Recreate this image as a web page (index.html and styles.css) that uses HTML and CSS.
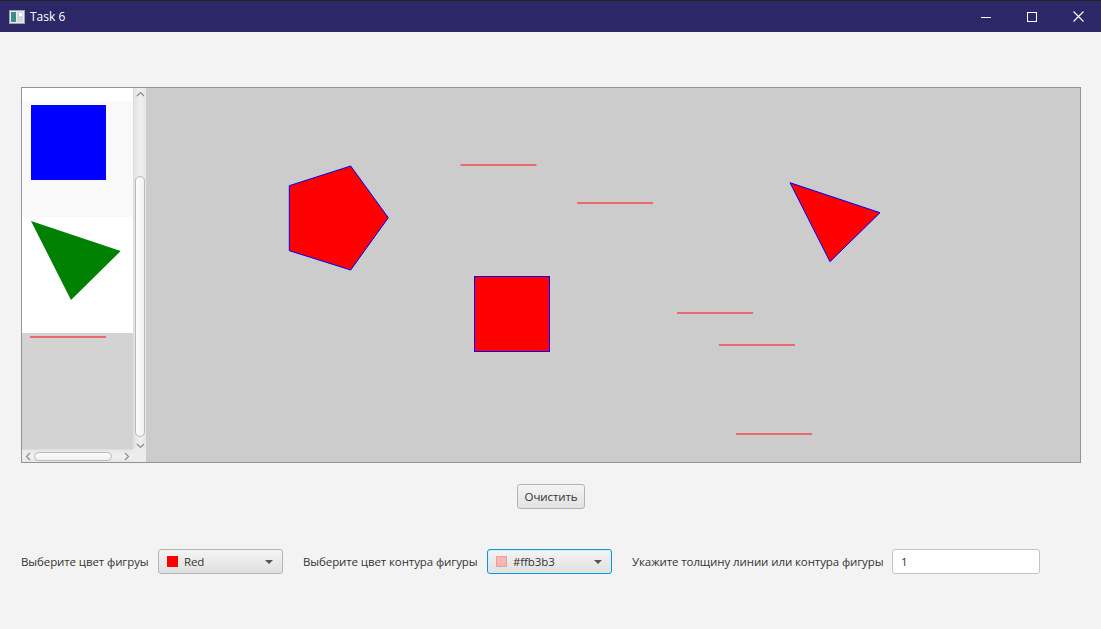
FILE: index.html
```html
<!DOCTYPE html>
<html lang="ru">
<head>
<meta charset="utf-8">
<title>Task 6</title>
<link rel="stylesheet" href="styles.css">
</head>
<body>
<header class="titlebar">
  <div class="title-left">
    <svg class="app-icon" width="16" height="14" viewBox="0 0 16 14">
      <rect x="0.5" y="0.5" width="15" height="13" fill="#e8ecef" stroke="#9aa4ad"/>
      <rect x="2" y="2" width="5" height="10" fill="#3f8a8c"/>
      <rect x="8" y="2" width="6" height="10" fill="#cfd8de"/>
      <rect x="10" y="3" width="3" height="3" fill="#ffffff"/>
    </svg>
    <span class="title-text">Task 6</span>
  </div>
  <div class="title-controls">
    <span class="tc"><svg width="10" height="10" viewBox="0 0 10 10"><path d="M0 5.5H10" stroke="#fff" stroke-width="1"/></svg></span>
    <span class="tc"><svg width="10" height="10" viewBox="0 0 10 10"><rect x="0.5" y="0.5" width="9" height="9" fill="none" stroke="#fff" stroke-width="1"/></svg></span>
    <span class="tc"><svg width="11" height="11" viewBox="0 0 11 11"><path d="M0.5 0.5L10.5 10.5M10.5 0.5L0.5 10.5" stroke="#fff" stroke-width="1.1"/></svg></span>
  </div>
</header>

<main class="content">
  <section class="board">
    <div class="palette">
      <div class="palette-view">
        <div class="list">
          <div class="cell-top"></div>
          <div class="cell cell-alt"><div class="blue-square"></div></div>
          <div class="cell cell-white">
            <svg class="tri" width="111" height="116" viewBox="0 0 111 116">
              <polygon points="9,4 98.7,34 49,83" fill="#008000"/>
            </svg>
          </div>
          <div class="cell-rest"><div class="list-line"></div></div>
        </div>
        <div class="vscroll">
          <svg class="arrow-up" width="9" height="6" viewBox="0 0 9 6"><path d="M1 5L4.5 1.5L8 5" fill="none" stroke="#8a8a8a" stroke-width="1.2"/></svg>
          <div class="vthumb-track"><div class="vthumb"></div></div>
          <svg class="arrow-down" width="9" height="6" viewBox="0 0 9 6"><path d="M1 1L4.5 4.5L8 1" fill="none" stroke="#8a8a8a" stroke-width="1.2"/></svg>
        </div>
      </div>
      <div class="hscroll-row">
        <div class="hscroll">
          <svg class="arrow-left" width="6" height="9" viewBox="0 0 6 9"><path d="M5 1L1.5 4.5L5 8" fill="none" stroke="#8a8a8a" stroke-width="1.2"/></svg>
          <div class="hthumb"></div>
          <svg class="arrow-right" width="6" height="9" viewBox="0 0 6 9"><path d="M1 1L4.5 4.5L1 8" fill="none" stroke="#8a8a8a" stroke-width="1.2"/></svg>
        </div>
        <div class="corner"></div>
      </div>
    </div>
    <div class="canvas">
      <svg class="drawing" width="934" height="374" viewBox="0 0 934 374">
        <polygon points="204.7,78 242.3,129.7 204.7,182 143.3,162.7 143.3,97.7" fill="#ff0000" stroke="#0000ff" stroke-width="1"/>
        <rect x="328.5" y="188.5" width="75" height="75" fill="#ff0000" stroke="#0000ff" stroke-width="1"/>
        <polygon points="644,94.7 734,124.7 684,173.7" fill="#ff0000" stroke="#0000ff" stroke-width="1"/>
        <g stroke="#e96a6c" stroke-width="2">
          <line x1="314.5" y1="77" x2="390.5" y2="77"/>
          <line x1="431" y1="115" x2="507" y2="115"/>
          <line x1="531" y1="225" x2="607" y2="225"/>
          <line x1="573" y1="257" x2="649" y2="257"/>
          <line x1="590" y1="346" x2="666" y2="346"/>
        </g>
      </svg>
    </div>
  </section>

  <div class="actions">
    <button class="btn" type="button">Очистить</button>
  </div>

  <div class="controls">
    <label class="lbl lbl-1">Выберите цвет фигруы</label>
    <div class="combo">
      <span class="swatch swatch-red"></span>
      <span class="combo-text">Red</span>
      <span class="caret"></span>
    </div>
    <label class="lbl lbl-2">Выберите цвет контура фигуры</label>
    <div class="combo combo-focused">
      <span class="swatch swatch-pink"></span>
      <span class="combo-text">#ffb3b3</span>
      <span class="caret"></span>
    </div>
    <label class="lbl lbl-3">Укажите толщину линии или контура фигуры</label>
    <div class="field">1</div>
  </div>
</main>
</body>
</html>
```

FILE: styles.css
```css
* { box-sizing: border-box; }

html, body {
  margin: 0;
  padding: 0;
}

body {
  width: 1101px;
  height: 629px;
  overflow: hidden;
  background: #f3f3f3;
  font-family: "Open Sans", "Noto Sans", sans-serif;
  font-size: 11.5px;
  letter-spacing: -0.1px;
  color: #333333;
}

/* Title bar */
.titlebar {
  height: 32px;
  background: #2c2868;
  border-top: 1px solid #232323;
  display: flex;
  align-items: center;
  justify-content: space-between;
}

.title-left {
  display: flex;
  align-items: center;
  padding-left: 9px;
  gap: 5px;
}

.title-text {
  color: #ffffff;
  font-size: 12px;
  line-height: 14px;
  letter-spacing: 0;
}

.title-controls {
  display: flex;
  height: 100%;
}

.tc {
  width: 46px;
  display: flex;
  align-items: center;
  justify-content: center;
}

/* Main */
.content {
  padding: 55px 20px 0 21px;
}

.board {
  width: 1060px;
  height: 376px;
  border: 1px solid #939393;
  display: flex;
}

.palette {
  width: 124px;
  height: 374px;
  display: flex;
  flex-direction: column;
}

.palette-view {
  height: 361px;
  display: flex;
}

.list {
  width: 111px;
  background: #d3d3d3;
  display: flex;
  flex-direction: column;
}

.cell-top {
  height: 13px;
  background: #ffffff;
}

.cell {
  height: 116px;
  flex: none;
}

.cell-alt {
  background: #f9f9f9;
  padding: 4px 0 0 9px;
}

.cell-white {
  background: #ffffff;
}

.tri { display: block; }

.blue-square {
  width: 75px;
  height: 75px;
  background: #0000ff;
}

.cell-rest {
  padding: 3px 0 0 8px;
}

.list-line {
  width: 76px;
  height: 2px;
  background: #e96a6c;
}

.vscroll {
  width: 13px;
  background: linear-gradient(to right, #e3e3e3, #efefef 50%, #e6e6e6);
  border-left: 1px solid #dddddd;
  display: flex;
  flex-direction: column;
  align-items: center;
  padding: 3px 0 3px;
}

.arrow-up, .arrow-down { flex: none; }

.vthumb-track {
  flex: 1;
  width: 100%;
  padding: 79px 1px 6px 1px;
}

.vthumb {
  height: 261px;
  width: 10px;
  margin: 0 auto;
  background: linear-gradient(to right, #fbfbfb, #f2f2f2);
  border: 1px solid #b9b9b9;
  border-radius: 5px;
}

.hscroll-row {
  height: 13px;
  display: flex;
}

.hscroll {
  width: 111px;
  background: linear-gradient(#e6e6e6, #f0f0f0 50%, #e6e6e6);
  border-top: 1px solid #dddddd;
  display: flex;
  align-items: center;
  padding: 0 3px 0 3px;
}

.arrow-left { flex: none; }

.arrow-right {
  flex: none;
  margin-left: auto;
}

.hthumb {
  width: 78px;
  height: 9px;
  margin-left: 3px;
  background: linear-gradient(#fbfbfb, #f0f0f0);
  border: 1px solid #b9b9b9;
  border-radius: 5px;
}

.corner {
  width: 13px;
  background: #ececec;
}

.canvas {
  width: 934px;
  height: 374px;
  background: #cccccc;
}

.drawing { display: block; }

/* Actions */
.actions {
  display: flex;
  justify-content: center;
  padding: 21px 0 0 0;
  margin-left: -1px;
}

.btn {
  width: 68px;
  height: 25px;
  font-family: "Open Sans", "Noto Sans", sans-serif;
  font-size: 11.5px;
  letter-spacing: -0.1px;
  color: #333333;
  background: linear-gradient(#f4f4f4, #e2e2e2);
  border: 1px solid #b3b3b3;
  border-radius: 3px;
  padding: 0;
  margin-left: 1px;
}

/* Controls row */
.controls {
  margin-top: 40px;
  display: flex;
  align-items: center;
  height: 25px;
}

.lbl {
  white-space: nowrap;
  color: #333333;
}

.lbl-1 { width: 137px; }
.lbl-2 { width: 184px; margin-left: 20px; }
.lbl-3 { width: 260px; margin-left: 20px; }

.combo {
  width: 125px;
  height: 25px;
  border: 1px solid #b4b4b4;
  border-radius: 3px;
  background: linear-gradient(#f4f4f4, #e0e0e0);
  display: flex;
  align-items: center;
  padding: 0 8px 0 8px;
}

.combo-focused {
  border: 1px solid #0f96d0;
  box-shadow: inset 0 0 0 1px #d6ecf6;
}

.swatch {
  width: 11px;
  height: 11px;
  flex: none;
}

.swatch-red { background: #ff0000; }

.swatch-pink {
  background: #ffb3b3;
  border: 1px solid #d9a5a5;
}

.combo-text {
  margin-left: 6px;
  flex: 1;
  color: #333333;
}

.caret {
  width: 0;
  height: 0;
  border-left: 4px solid transparent;
  border-right: 4px solid transparent;
  border-top: 4px solid #555555;
  margin-right: 1px;
}

.field {
  width: 148px;
  height: 25px;
  background: #ffffff;
  border: 1px solid #c4c4c4;
  border-radius: 3px;
  padding: 0 0 0 8px;
  display: flex;
  align-items: center;
  color: #333333;
}
```
